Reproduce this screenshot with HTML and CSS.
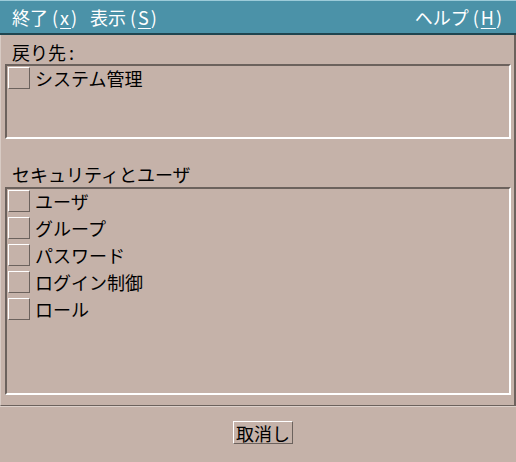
FILE: index.html
```html
<!DOCTYPE html>
<html lang="ja">
<head>
    <meta charset="UTF-8">
    <title>セキュリティとユーザ</title>
    <link rel="stylesheet" href="styles.css">
</head>
<body>
<div class="window">
    <div class="menubar">
        <span class="menu menu-first">終了<span class="key">(<u>x</u>)</span></span>
        <span class="menu">表示<span class="key">(<u>S</u>)</span></span>
        <span class="menu menu-right">ヘルプ<span class="key">(<u>H</u>)</span></span>
    </div>

    <div class="main">
        <div class="label">戻り先<span class="colon">:</span></div>
        <div class="list list-short">
            <div class="item"><span class="check"></span>システム管理</div>
        </div>

        <div class="label label-gap">セキュリティとユーザ</div>
        <div class="list list-tall">
            <div class="item"><span class="check"></span>ユーザ</div>
            <div class="item"><span class="check"></span>グループ</div>
            <div class="item"><span class="check"></span>パスワード</div>
            <div class="item"><span class="check"></span>ログイン制御</div>
            <div class="item"><span class="check"></span>ロール</div>
        </div>
    </div>

    <div class="footer">
        <button type="button" class="btn">取消し</button>
    </div>
</div>
</body>
</html>
```

FILE: styles.css
```css
body { margin: 0; background: #c5b2a9; color: #000; font-family: "Noto Sans CJK JP", sans-serif; font-size: 18px; }
.window { width: 516px; height: 462px; display: flex; flex-direction: column; }

.menubar { display: flex; align-items: center; height: 32px; padding: 0 12px 0 12px; background: #4b92a8; color: #fff; border-top: 1px solid #9ccbd9; border-bottom: 2px solid #1f4550; line-height: 29px; }
.menu { white-space: nowrap; }
.menu-first { width: 78px; }
.menu-right { margin-left: auto; }
.key { padding-left: 4px; letter-spacing: 2px; }
.key u { text-underline-offset: 3px; }

.main { box-sizing: border-box; height: 371px; padding: 6px 3px 0 4px; border-left: 1px solid #d8cbc4; border-right: 2px solid #6c625d; border-bottom: 1px solid #6c625d; }
.label { line-height: 22px; padding-left: 7px; margin-bottom: 1px; }
.label-gap { margin-top: 24px; margin-bottom: 2px; }
.colon { padding-left: 3px; }

.list { box-sizing: border-box; padding: 1px 1px 0; border: 2px solid; border-color: #6c625d #fff #fff #6c625d; }
.list-short { height: 75px; }
.list-tall { height: 208px; }

.item { display: flex; align-items: center; gap: 5px; height: 22px; margin-bottom: 5px; line-height: 22px; }
.check { box-sizing: border-box; width: 22px; height: 22px; border: 1px solid; border-color: #fff #6c625d #6c625d #fff; }

.footer { flex: 1; display: flex; justify-content: center; align-items: flex-start; padding: 14px 0 0 10px; border-top: 1px solid #ddd1cb; }
.btn { box-sizing: border-box; height: 23px; padding: 0 2px; font: inherit; line-height: 20px; color: #000; background: #c5b2a9; border: 1px solid; border-color: #fff #6c625d #6c625d #fff; }
```
